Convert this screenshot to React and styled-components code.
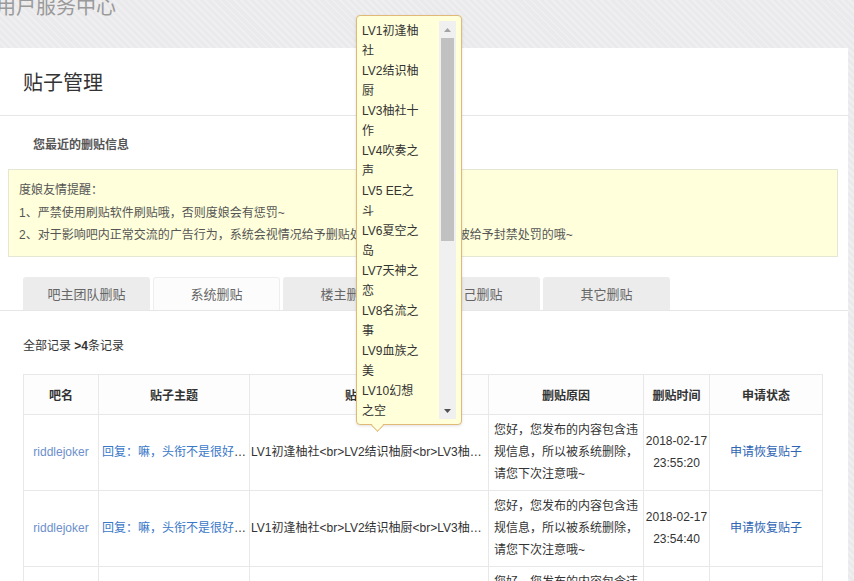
import React from "react"
import styled, { createGlobalStyle } from "styled-components"

const GlobalStyle = createGlobalStyle`
  html, body {
    margin: 0;
    padding: 0;
    overflow: hidden;
    background: #eae9eb;
    font-family: "Liberation Sans", "Noto Sans CJK SC", sans-serif;
    font-size: 12px;
    color: #333;
  }
`

const Page = styled.div`
  position: relative;
  width: 854px;
  height: 581px;
  overflow: hidden;
  background-color: #eae9eb;
  background-image: repeating-linear-gradient(45deg, rgba(255,255,255,0.25) 0 2px, transparent 2px 5px);
`

const TopBar = styled.div`
  height: 48px;
  display: flow-root;
`

const SiteTitle = styled.div`
  margin: -4px 0 0 -4px;
  font-size: 20px;
  line-height: 22px;
  color: #9a9a9a;
`

const Panel = styled.div`
  width: 848px;
  background: #fff;
  padding-bottom: 40px;
`

const PanelHead = styled.div`
  height: 67px;
  display: flex;
  align-items: center;
  padding-left: 23px;
  border-bottom: 1px solid #e6e6e6;
`

const PageTitle = styled.h1`
  margin: 0;
  font-size: 20px;
  font-weight: normal;
  color: #333;
`

const SectionTitle = styled.div`
  height: 53px;
  box-sizing: border-box;
  padding: 19px 0 0 33px;
  font-weight: bold;
  line-height: 20px;
  color: #555;
`

const Notice = styled.div`
  margin: 0 10px 0 8px;
  padding: 9px 10px;
  background: #ffffdb;
  border: 1px solid #e6e6d4;
  color: #555;
  line-height: 22.5px;
`

const Tabs = styled.div`
  display: flex;
  gap: 3px;
  margin-top: 20px;
  padding-left: 23px;
  border-bottom: 1px solid #e6e6e6;
`

const Tab = styled.div`
  width: 127px;
  height: 33px;
  box-sizing: border-box;
  display: flex;
  align-items: center;
  justify-content: center;
  font-size: 13px;
  color: #666;
  border-radius: 3px 3px 0 0;
  background: ${(p) => (p.$active ? "#fcfcfc" : "#ececec")};
  border: 1px solid ${(p) => (p.$active ? "#eeeeee" : "#ececec")};
  border-bottom: none;
`

const Summary = styled.div`
  padding: 25px 23px 18px;
  line-height: 20px;
  color: #333;
`

const Count = styled.b`
  color: #333;
`

const Table = styled.table`
  margin-left: 23px;
  width: 799px;
  table-layout: fixed;
  border-collapse: collapse;
`

const Th = styled.th`
  height: 37px;
  border: 1px solid #e8e8e8;
  font-size: 12px;
  font-weight: bold;
  color: #333;
  background: #fdfdfd;
`

const Td = styled.td`
  height: 75px;
  border: 1px solid #e8e8e8;
  padding: 0 ${(p) => p.$padR ?? p.$pad ?? 4}px 0 ${(p) => p.$pad ?? 4}px;
  text-align: ${(p) => p.$align || "left"};
  line-height: 22px;
  color: #333;
  overflow: hidden;
  white-space: ${(p) => (p.$nowrap ? "nowrap" : "normal")};
  text-overflow: ellipsis;
`

const Link = styled.a`
  color: ${(p) => p.$color || "#3a78c8"};
  text-decoration: none;
`

const Popup = styled.div`
  position: absolute;
  left: 356px;
  top: 15px;
  width: 106px;
  height: 410px;
  box-sizing: border-box;
  display: flex;
  padding: 5px;
  background: #ffffd9;
  border: 1px solid #e0b978;
  border-radius: 4px;
  box-shadow: 0 1px 3px rgba(0, 0, 0, 0.12);

  &::after {
    content: "";
    position: absolute;
    left: 16px;
    bottom: -6px;
    width: 8px;
    height: 8px;
    background: #ffffd9;
    border-right: 1px solid #e0b978;
    border-bottom: 1px solid #e0b978;
    transform: rotate(45deg);
  }
`

const LevelList = styled.div`
  flex: 1;
  overflow: hidden;
`

const Level = styled.div`
  width: 60px;
  line-height: 20px;
  color: #333;
`

const Scrollbar = styled.div`
  width: 17px;
  display: flex;
  flex-direction: column;
  background: #f0f0f0;
`

const ScrollArrow = styled.div`
  height: 17px;
  display: flex;
  align-items: center;
  justify-content: center;
`

const Thumb = styled.div`
  height: 203px;
  margin: 0 2px;
  background: #c1c1c1;
`

const Track = styled.div`
  flex: 1;
`

const levels = [
  "LV1初逢柚社",
  "LV2结识柚厨",
  "LV3柚社十作",
  "LV4吹奏之声",
  "LV5 EE之斗",
  "LV6夏空之岛",
  "LV7天神之恋",
  "LV8名流之事",
  "LV9血族之美",
  "LV10幻想之空",
  "LV11千恋之歌",
]

const rows = [
  { time: ["2018-02-17", "23:55:20"] },
  { time: ["2018-02-17", "23:54:40"] },
  { time: ["2018-02-17", "23:50:12"] },
]

const tabs = ["吧主团队删贴", "系统删贴", "楼主删贴", "自己删贴", "其它删贴"]

export default function App() {
  return (
    <Page>
      <GlobalStyle />
      <TopBar>
        <SiteTitle>用户服务中心</SiteTitle>
      </TopBar>
      <Panel>
        <PanelHead>
          <PageTitle>贴子管理</PageTitle>
        </PanelHead>
        <SectionTitle>您最近的删贴信息</SectionTitle>
        <Notice>
          度娘友情提醒：<br />
          1、严禁使用刷贴软件刷贴哦，否则度娘会有惩罚~<br />
          2、对于影响吧内正常交流的广告行为，系统会视情况给予删贴处理，情节严重者会被给予封禁处罚的哦~
        </Notice>
        <Tabs>
          {tabs.map((t, i) => (
            <Tab key={t} $active={i === 1}>{t}</Tab>
          ))}
        </Tabs>
        <Summary>
          全部记录 <Count>&gt;4</Count>条记录
        </Summary>
        <Table>
          <colgroup>
            <col style={{ width: 75 }} />
            <col style={{ width: 151 }} />
            <col style={{ width: 239 }} />
            <col style={{ width: 155 }} />
            <col style={{ width: 66 }} />
            <col style={{ width: 113 }} />
          </colgroup>
          <thead>
            <tr>
              <Th>吧名</Th>
              <Th>贴子主题</Th>
              <Th>贴子内容</Th>
              <Th>删贴原因</Th>
              <Th>删贴时间</Th>
              <Th>申请状态</Th>
            </tr>
          </thead>
          <tbody>
            {rows.map((r, i) => (
              <tr key={i}>
                <Td $align="center" $nowrap>
                  <Link $color="#6b8fcb">riddlejoker</Link>
                </Td>
                <Td $nowrap $pad={3} $padR={0}>
                  <Link>回复：嘛，头衔不是很好看，换一下吧</Link>
                </Td>
                <Td $nowrap $pad={1} $padR={0}>
                  LV1初逢柚社&lt;br&gt;LV2结识柚厨&lt;br&gt;LV3柚社十作&lt;br&gt;LV4吹奏之声
                </Td>
                <Td $pad={5}>您好，您发布的内容包含违规信息，所以被系统删除，请您下次注意哦~</Td>
                <Td $align="center" $pad={0}>
                  {r.time[0]}
                  <br />
                  {r.time[1]}
                </Td>
                <Td $align="center">
                  <Link $color="#2d64b3">申请恢复贴子</Link>
                </Td>
              </tr>
            ))}
          </tbody>
        </Table>
      </Panel>
      <Popup>
        <LevelList>
          {levels.map((l) => (
            <Level key={l}>{l}</Level>
          ))}
        </LevelList>
        <Scrollbar>
          <ScrollArrow>
            <svg width="7" height="4" viewBox="0 0 7 4">
              <path d="M0 4 L3.5 0 L7 4 Z" fill="#a3a3a3" />
            </svg>
          </ScrollArrow>
          <Thumb />
          <Track />
          <ScrollArrow>
            <svg width="7" height="4" viewBox="0 0 7 4">
              <path d="M0 0 L3.5 4 L7 0 Z" fill="#505050" />
            </svg>
          </ScrollArrow>
        </Scrollbar>
      </Popup>
    </Page>
  )
}
